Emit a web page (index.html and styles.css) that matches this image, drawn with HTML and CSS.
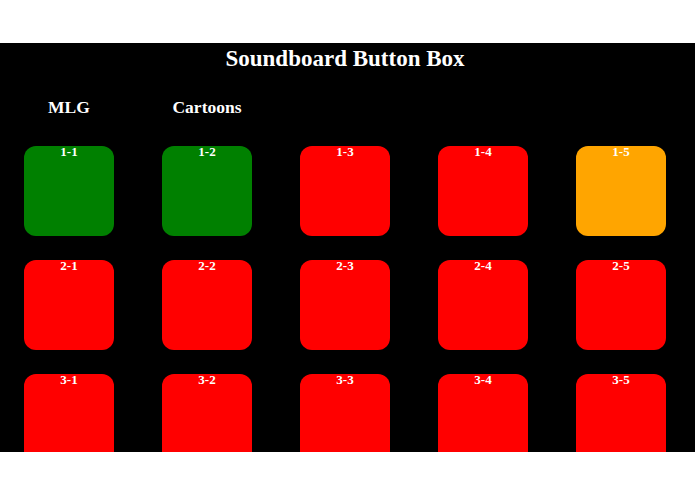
FILE: index.html
```html
<!DOCTYPE html>
<html>
<head>
<meta charset="utf-8">
<link rel="stylesheet" href="styles.css">
</head>
<body>
<div class="stage">
  <div class="inner">
    <h1 class="title">Soundboard Button Box</h1>
    <div class="cats">
      <div class="cat">MLG</div>
      <div class="cat">Cartoons</div>
    </div>
    <div class="grid">
      <div class="cell"><div class="btn green">1-1</div></div>
      <div class="cell"><div class="btn green">1-2</div></div>
      <div class="cell"><div class="btn red">1-3</div></div>
      <div class="cell"><div class="btn red">1-4</div></div>
      <div class="cell"><div class="btn orange">1-5</div></div>
      <div class="cell"><div class="btn red">2-1</div></div>
      <div class="cell"><div class="btn red">2-2</div></div>
      <div class="cell"><div class="btn red">2-3</div></div>
      <div class="cell"><div class="btn red">2-4</div></div>
      <div class="cell"><div class="btn red">2-5</div></div>
      <div class="cell"><div class="btn red">3-1</div></div>
      <div class="cell"><div class="btn red">3-2</div></div>
      <div class="cell"><div class="btn red">3-3</div></div>
      <div class="cell"><div class="btn red">3-4</div></div>
      <div class="cell"><div class="btn red">3-5</div></div>
    </div>
  </div>
</div>
</body>
</html>
```
FILE: styles.css
```css
html, body {
  margin: 0;
  padding: 0;
  background: #fff;
}
body {
  padding-top: 43px;
  font-family: "Liberation Serif", "Times New Roman", serif;
}
.stage {
  background: #000;
  height: 409px;
  overflow: hidden;
  color: #fff;
}
.inner {
  width: 690px;
}
.title {
  margin: 0;
  padding-top: 1px;
  font-size: 23px;
  line-height: 30px;
  text-align: center;
  font-weight: bold;
}
.cats {
  display: grid;
  grid-template-columns: repeat(5, 138px);
  margin-top: 22px;
}
.cat {
  font-size: 17.5px;
  line-height: 22px;
  font-weight: bold;
  text-align: center;
}
.grid {
  display: grid;
  grid-template-columns: repeat(5, 138px);
  row-gap: 24px;
  margin-top: 28px;
}
.cell {
  display: flex;
  justify-content: center;
}
.btn {
  width: 90px;
  height: 90px;
  border-radius: 12px;
  font-size: 13px;
  line-height: 11px;
  font-weight: bold;
  text-align: center;
  color: #fff;
}
.green { background: #008000; }
.red { background: #ff0000; }
.orange { background: #ffa500; }
```
